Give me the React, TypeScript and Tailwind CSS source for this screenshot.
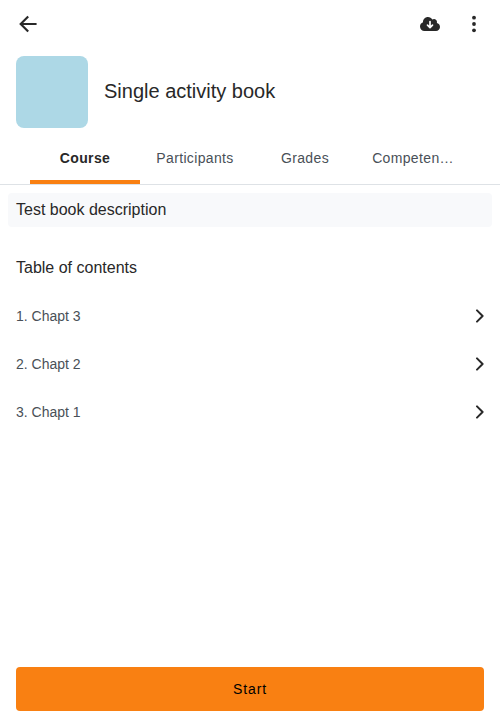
import React from 'react';

const tabs = ['Course', 'Participants', 'Grades', 'Competen…'];
const chapters = ['1. Chapt 3', '2. Chapt 2', '3. Chapt 1'];

function BackIcon() {
  return (
    <svg className="size-6" viewBox="0 0 512 512" fill="none" stroke="#282828" strokeWidth="46" strokeLinecap="square" strokeMiterlimit="10">
      <path d="M244 112L100 256l144 144M120 256h296" />
    </svg>
  );
}

function CloudIcon() {
  return (
    <svg className="h-4 w-5" viewBox="0 0 640 512">
      <path
        fill="#282828"
        d="M144 480C64.5 480 0 415.500 0 336c0-62.800 40.200-116.200 96.200-135.900-.1-2.700-.2-5.400-.2-8.100 0-88.400 71.600-160 160-160 59.300 0 111 32.200 138.700 80.200C409.900 102 428.300 96 448 96c53 0 96 43 96 96 0 12.200-2.300 23.800-6.400 34.600C596 238.400 640 290.100 640 352c0 70.700-57.300 128-128 128H144z"
      />
      <path d="M320 176v192M240 294l80 80 80-80" fill="none" stroke="#fff" strokeWidth="54" strokeLinecap="round" strokeLinejoin="round" />
    </svg>
  );
}

function MoreIcon() {
  return (
    <svg className="size-6" viewBox="0 0 24 24" fill="#282828">
      <circle cx="12" cy="5.7" r="1.9" />
      <circle cx="12" cy="12" r="1.9" />
      <circle cx="12" cy="18.3" r="1.9" />
    </svg>
  );
}

function Chevron() {
  return (
    <svg className="h-4 w-2.5" viewBox="0 0 10 16" fill="none" stroke="#282828" strokeWidth="2" strokeLinecap="round" strokeLinejoin="round">
      <path d="M3 2.4L8.600 8 3 13.600" />
    </svg>
  );
}

export default function App() {
  return (
    <div className="flex h-[720px] w-[500px] flex-col bg-white font-['Liberation_Sans',sans-serif] text-[#282828]">
      <header className="flex h-12 items-center justify-between pr-3.5 pl-4">
        <button aria-label="Back"><BackIcon /></button>
        <div className="flex items-center gap-[22px]">
          <button aria-label="Download"><CloudIcon /></button>
          <button aria-label="More"><MoreIcon /></button>
        </div>
      </header>
      <div className="flex h-[84px] items-center gap-4 px-4 pt-2 pb-1">
        <div className="size-[72px] rounded-lg bg-[#add8e6]" />
        <h1 className="pb-0.5 text-xl leading-6">Single activity book</h1>
      </div>
      <nav className="flex h-[53px] border-b border-[#dee2e6] px-[30px]">
        {tabs.map((t, i) => (
          <button key={t} className={`w-[110px] border-b-4 pt-1 text-sm tracking-[0.35px] ${i === 0 ? 'border-[#f98012] font-bold' : 'border-transparent text-[#495057]'} ${i === 3 ? 'pr-1' : ''}`}>
            {t}
          </button>
        ))}
      </nav>
      <main className="flex flex-1 flex-col">
        <p className="mx-2 mt-2 h-[34px] rounded-[4px] bg-[#f8f9fb] px-2 leading-[34px]">Test book description</p>
        <h2 className="mt-[17px] h-12 px-4 leading-[48px]">Table of contents</h2>
        <ul>
          {chapters.map((c) => (
            <li key={c} className="flex h-12 items-center justify-between px-4 text-sm text-[#495057]">
              {c}
              <Chevron />
            </li>
          ))}
        </ul>
      </main>
      <footer className="px-4 pb-[9px]">
        <button className="h-11 w-full rounded-[4px] bg-[#f98012] text-sm tracking-[0.84px] text-black">Start</button>
      </footer>
    </div>
  );
}
